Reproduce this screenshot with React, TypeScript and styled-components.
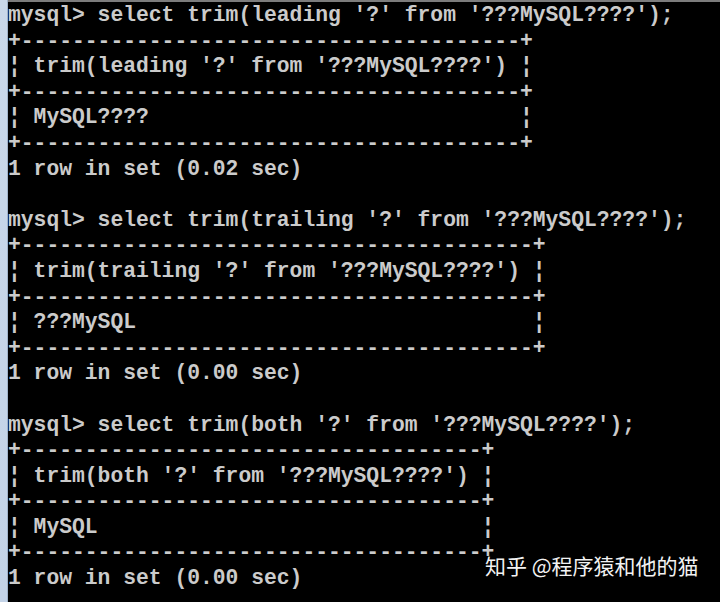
import React from "react";
import styled, { createGlobalStyle } from "styled-components";

const Global = createGlobalStyle`
  html, body { margin: 0; padding: 0; background: #000; }
  #root { width: 720px; height: 602px; }
`;

const Page = styled.div`
  position: relative;
  display: flex;
  width: 720px;
  height: 602px;
  overflow: hidden;
  background: #000;
`;

const LeftStrip = styled.div`
  flex: 0 0 7px;
  background: linear-gradient(#c9d8ea, #c3d3e7);
  border-right: 1px solid #9fb2c9;
`;

const Console = styled.div`
  flex: 1;
  display: flex;
  flex-direction: column;
  padding-top: 1px;
  background: #000;
  border-top: 2px solid #7c7c7c;
`;

const Line = styled.div`
  height: 25.6px;
  line-height: 25.6px;
  white-space: pre;
  font-family: "Liberation Mono", "DejaVu Sans Mono", monospace;
  font-weight: bold;
  font-size: 21.33px;
  color: #cbcbcb;
`;

const Watermark = styled.div`
  position: absolute;
  left: 485px;
  top: 550px;
  font-family: "Noto Sans CJK SC", "Noto Sans", sans-serif;
  font-size: 21px;
  line-height: 30px;
  color: #f2f2f2;
  text-shadow: 0 0 2px rgba(0, 0, 0, 0.6);
`;

const queries = [
  { kind: "leading", result: "MySQL????", time: "0.02" },
  { kind: "trailing", result: "???MySQL", time: "0.00" },
  { kind: "both", result: "MySQL", time: "0.00" },
];

function buildLines(): string[] {
  const out: string[] = [];
  queries.forEach((q, i) => {
    const expr = `trim(${q.kind} '?' from '???MySQL????')`;
    const border = "+" + "-".repeat(expr.length + 2) + "+";
    out.push(`mysql> select ${expr};`);
    out.push(border);
    out.push(`¦ ${expr} ¦`);
    out.push(border);
    out.push(`¦ ${q.result.padEnd(expr.length, " ")} ¦`);
    out.push(border);
    out.push(`1 row in set (${q.time} sec)`);
    if (i < queries.length - 1) out.push("");
  });
  return out;
}

export default function App() {
  const lines = buildLines();
  return (
    <>
      <Global />
      <Page>
        <LeftStrip />
        <Console>
          {lines.map((l, i) => (
            <Line key={i}>{l || " "}</Line>
          ))}
        </Console>
        <Watermark>知乎 @程序猿和他的猫</Watermark>
      </Page>
    </>
  );
}
